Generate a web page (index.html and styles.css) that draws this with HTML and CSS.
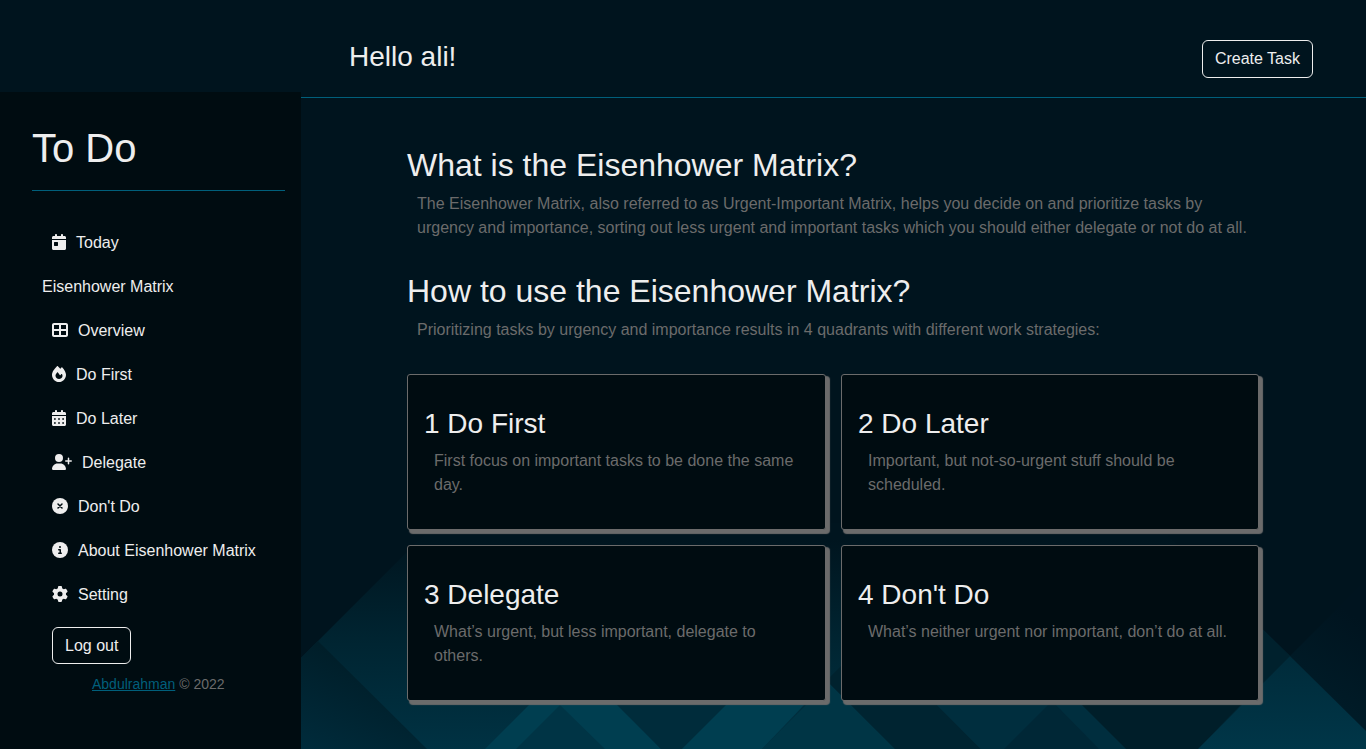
FILE: index.html
```html
<!DOCTYPE html>
<html lang="en">
<head>
<meta charset="utf-8">
<title>To Do</title>
<link rel="stylesheet" href="styles.css">
</head>
<body>
<svg class="backdrop" viewBox="0 0 1366 749" aria-hidden="true">
  <defs>
    <linearGradient id="fade" gradientUnits="userSpaceOnUse" x1="0" y1="540" x2="0" y2="749">
      <stop offset="0" stop-color="#00151f"/><stop offset=".5" stop-color="#002532"/><stop offset="1" stop-color="#003243"/>
    </linearGradient>
    <linearGradient id="low" gradientUnits="userSpaceOnUse" x1="310" y1="749" x2="350" y2="660">
      <stop offset="0" stop-color="#002b3b"/><stop offset="1" stop-color="#001e29"/>
    </linearGradient>
    <linearGradient id="peak" gradientUnits="userSpaceOnUse" x1="0" y1="656" x2="0" y2="749">
      <stop offset="0" stop-color="#002b3a"/><stop offset="1" stop-color="#003648"/>
    </linearGradient>
    <linearGradient id="dusk" gradientUnits="userSpaceOnUse" x1="1300" y1="680" x2="1345" y2="610">
      <stop offset="0" stop-color="#001b27"/><stop offset="1" stop-color="#00141f"/>
    </linearGradient>
  </defs>
  <path fill="url(#fade)" d="M301 658 436 523H1155L1290 656 1198 749H301z"/>
  <path fill="url(#low)" d="M301 658 318 641 427 749H301z"/>
  <path fill="#003e50" d="M485 749 573 661 661 749z"/>
  <path fill="#003445" d="M516 749 560 705 605 749z"/>
  <path fill="#002c3b" d="M618 705H726L682 749H661z"/>
  <path fill="#003e50" d="M682 749 726 705H804L762 749z"/>
  <path fill="#003545" d="M762 749 830 681V684L895 749z"/>
  <path fill="#00222e" d="M830 677 841 666V695L830 684z"/>
  <path fill="#002431" d="M851 705H937L981 749H895z"/>
  <path fill="#002e3e" d="M937 705H1082L1126 749H981z"/>
  <path fill="#002736" d="M1004 749 1052 701 1099 749z"/>
  <path fill="#001e29" d="M1082 705H1241L1198 749H1126z"/>
  <path fill="#00212d" d="M1259 626 1290 656 1259 687z"/>
  <path fill="url(#dusk)" d="M1290 656 1366 580V732z"/>
  <path fill="url(#peak)" d="M1198 749 1290 656 1366 731V749z"/>
</svg>
<div class="page">
  <aside class="sidebar">
    <h1 class="brand">To Do</h1>
    <nav class="menu">
      <a class="item"><svg class="icon narrow" viewBox="0 0 448 512"><path d="M128 0c17.7 0 32 14.3 32 32V64H288V32c0-17.7 14.3-32 32-32s32 14.3 32 32V64h48c26.5 0 48 21.5 48 48v48H0V112C0 85.5 21.5 64 48 64H96V32c0-17.7 14.3-32 32-32zM0 192H448V464c0 26.5-21.5 48-48 48H48c-26.5 0-48-21.5-48-48V192zm80 64c-8.800 0-16 7.200-16 16v96c0 8.800 7.200 16 16 16h96c8.800 0 16-7.200 16-16V272c0-8.800-7.200-16-16-16H80z"/></svg>Today</a>
      <div class="item group">Eisenhower Matrix</div>
      <a class="item"><svg class="icon" viewBox="0 0 512 512"><path d="M448 96V224H288V96H448zm0 192V416H288V288H448zM224 224H64V96H224V224zM64 288H224V416H64V288zM64 32C28.700 32 0 60.700 0 96V416c0 35.300 28.700 64 64 64H448c35.300 0 64-28.700 64-64V96c0-35.300-28.700-64-64-64H64z"/></svg>Overview</a>
      <a class="item"><svg class="icon narrow" viewBox="0 0 448 512"><path d="M159.300 5.400c7.800-7.300 19.900-7.200 27.700 .1c27.600 25.900 53.500 53.800 77.700 84c11-14.400 23.500-30.100 37-42.900c7.900-7.400 20.100-7.400 28 .1c34.600 33 63.900 76.600 84.500 118c20.300 40.800 33.800 82.500 33.800 111.900C448 404.200 348.200 512 224 512C98.400 512 0 404.100 0 276.500c0-38.400 17.800-85.300 45.400-131.700C73.300 97.700 112.700 48.600 159.300 5.400zM225.700 416c25.300 0 47.700-7 68.800-21c42.100-29.400 53.400-88.200 28.100-134.400c-4.500-9-16-9.600-22.500-2l-25.200 29.300c-6.600 7.600-18.500 7.400-24.700-.5c-16.500-21-46-58.500-62.800-79.800c-6.300-8-18.300-8.100-24.700-.1c-33.800 42.500-50.800 69.300-50.800 99.400C112 375.400 162.600 416 225.700 416z"/></svg>Do First</a>
      <a class="item"><svg class="icon narrow" viewBox="0 0 448 512"><path fill-rule="evenodd" d="M128 0c17.700 0 32 14.300 32 32V64H288V32c0-17.700 14.300-32 32-32s32 14.300 32 32V64h48c26.500 0 48 21.500 48 48v48H0V112C0 85.500 21.500 64 48 64H96V32c0-17.700 14.300-32 32-32zM0 192H448V464c0 26.500-21.500 48-48 48H48c-26.500 0-48-21.500-48-48zM64 264h56v48H64zM196 264h56v48h-56zM328 264h56v48h-56zM64 392h56v48H64zM196 392h56v48h-56zM328 392h56v48h-56z"/></svg>Do Later</a>
      <a class="item"><svg class="icon wide" viewBox="0 0 640 512"><path d="M96 128a128 128 0 1 1 256 0A128 128 0 1 1 96 128zM0 482.300C0 383.800 79.800 304 178.300 304h91.400C368.200 304 448 383.800 448 482.300c0 16.400-13.300 29.700-29.700 29.700H29.700C13.300 512 0 498.700 0 482.300zM504 312V248H440c-13.300 0-24-10.700-24-24s10.700-24 24-24h64V136c0-13.300 10.700-24 24-24s24 10.700 24 24v64h64c13.300 0 24 10.700 24 24s-10.700 24-24 24H552v64c0 13.300-10.700 24-24 24s-24-10.700-24-24z"/></svg>Delegate</a>
      <a class="item"><svg class="icon" viewBox="0 0 512 512"><circle cx="256" cy="256" r="256"/><path class="cut" d="M192 192 320 320M320 192 192 320"/></svg>Don't Do</a>
      <a class="item"><svg class="icon" viewBox="0 0 512 512"><circle cx="256" cy="256" r="256"/><circle class="hole" cx="256" cy="160" r="32"/><path class="cut" d="M216 248H264V360M216 360H296"/></svg>About Eisenhower Matrix</a>
      <a class="item"><svg class="icon" viewBox="0 0 512 512"><path fill-rule="evenodd" d="M495.900 166.600c3.200 8.700 .5 18.400-6.400 24.600l-43.300 39.400c1.100 8.300 1.700 16.800 1.700 25.400s-.6 17.100-1.700 25.400l43.300 39.400c6.900 6.200 9.600 15.900 6.400 24.600c-4.400 11.900-9.700 23.300-15.800 34.300l-4.700 8.100c-6.600 11-14 21.400-22.100 31.200c-5.900 7.200-15.700 9.600-24.500 6.800l-55.700-17.700c-13.400 10.300-28.200 18.900-44 25.400l-12.500 57.100c-2 9.100-9 16.300-18.200 17.800c-13.800 2.300-28 3.500-42.500 3.500s-28.700-1.200-42.500-3.500c-9.200-1.500-16.200-8.700-18.200-17.800l-12.500-57.100c-15.800-6.500-30.600-15.100-44-25.400L83.100 425.900c-8.800 2.800-18.600 .3-24.500-6.800c-8.100-9.800-15.500-20.200-22.100-31.200l-4.700-8.100c-6.100-11-11.400-22.400-15.800-34.300c-3.200-8.700-.5-18.400 6.400-24.600l43.300-39.400C64.600 273.100 64 264.600 64 256s.6-17.100 1.700-25.400L22.400 191.200c-6.900-6.200-9.600-15.900-6.400-24.600c4.400-11.900 9.700-23.300 15.800-34.300l4.700-8.100c6.600-11 14-21.400 22.100-31.200c5.900-7.200 15.700-9.600 24.500-6.800l55.700 17.700c13.400-10.300 28.200-18.900 44-25.400l12.500-57.100c2-9.100 9-16.300 18.200-17.800C227.300 1.200 241.500 0 256 0s28.700 1.200 42.500 3.500c9.200 1.500 16.200 8.700 18.200 17.800l12.500 57.100c15.800 6.500 30.600 15.100 44 25.400l55.700-17.700c8.800-2.800 18.600-.3 24.500 6.800c8.100 9.800 15.500 20.200 22.100 31.200l4.700 8.100c6.100 11 11.400 22.400 15.800 34.300zM256 336a80 80 0 1 0 0-160 80 80 0 1 0 0 160z"/></svg>Setting</a>
    </nav>
    <button class="btn logout">Log out</button>
    <p class="credit"><a class="author" href="#">Abdulrahman</a> © 2022</p>
  </aside>
  <div class="main">
    <header class="topbar">
      <h3 class="greeting">Hello ali!</h3>
      <button class="btn">Create Task</button>
    </header>
    <main class="content">
      <section class="block">
        <h2 class="title">What is the Eisenhower Matrix?</h2>
        <p class="text">The Eisenhower Matrix, also referred to as Urgent-Important Matrix, helps you decide on and prioritize tasks by urgency and importance, sorting out less urgent and important tasks which you should either delegate or not do at all.</p>
      </section>
      <section class="block">
        <h2 class="title">How to use the Eisenhower Matrix?</h2>
        <p class="text">Prioritizing tasks by urgency and importance results in 4 quadrants with different work strategies:</p>
      </section>
      <div class="cards">
        <article class="card"><h3 class="card-title">1 Do First</h3><p class="text">First focus on important tasks to be done the same day.</p></article>
        <article class="card"><h3 class="card-title">2 Do Later</h3><p class="text">Important, but not-so-urgent stuff should be scheduled.</p></article>
        <article class="card"><h3 class="card-title">3 Delegate</h3><p class="text">What’s urgent, but less important, delegate to others.</p></article>
        <article class="card"><h3 class="card-title">4 Don't Do</h3><p class="text">What’s neither urgent nor important, don’t do at all.</p></article>
      </div>
    </main>
  </div>
</div>
</body>
</html>
```
FILE: styles.css
```css
* { box-sizing: border-box; margin: 0; }
body {
  height: 749px;
  overflow: hidden;
  background: #00141e;
  color: #eee;
  font: 16px/24px "Liberation Sans", Arial, sans-serif;
}
h1, h2, h3 { font-weight: 400; line-height: 1.2; }
.backdrop { position: absolute; top: 0; left: 0; z-index: -1; width: 1366px; height: 749px; }
.page { display: flex; height: 749px; }
.sidebar {
  width: 301px;
  margin-top: 92px;
  padding: 32px 16px 0 32px;
  background: #000c11;
}
.brand { height: 67px; border-bottom: 1px solid #005f7b; font-size: 40px; }
.menu { padding: 30px 0 0 10px; }
.item { display: flex; align-items: center; gap: 10px; height: 44px; padding: 0 10px; white-space: nowrap; }
.group { padding: 0; }
.icon { width: 16px; height: 16px; margin-bottom: 2px; fill: #eee; }
.narrow { width: 14px; }
.wide { width: 20px; }
.cut { fill: none; stroke: #000c11; stroke-width: 48px; stroke-linecap: round; stroke-linejoin: round; }
.hole { fill: #000c11; }
.btn {
  height: 38px;
  padding: 0 12px;
  border: 1px solid #eee;
  border-radius: 6px;
  background: transparent;
  color: #eee;
  font: inherit;
  line-height: 34px;
}
.logout { display: block; height: 37px; margin: 10px 0 0 20px; }
.credit { margin: 8px 0 0 60px; color: #6b6b6b; font-size: 14px; }
.author { color: #005f7b; }
.main { flex: 1; }
.topbar {
  display: flex;
  justify-content: space-between;
  align-items: flex-start;
  height: 98px;
  padding: 40px 53px 0 48px;
  border-bottom: 1px solid #005f7b;
}
.greeting { font-size: 28px; }
.content { padding: 48px 106px 0; }
.block { margin-bottom: 32px; }
.title { height: 38px; margin-bottom: 8px; font-size: 32px; }
.text { padding: 0 10px; color: #6b6b6b; }
.cards { display: grid; grid-template-columns: 419px 418px; gap: 15px; }
.card {
  height: 156px;
  padding: 32px 16px;
  border: 1px solid #6b6b6b;
  border-radius: 3px;
  background: #000c11;
  box-shadow: 3px 3px 1px 1px #6b6b6b;
}
.card-title { height: 33px; margin-bottom: 9px; font-size: 28px; }
.card .text { padding-right: 9px; }
```
